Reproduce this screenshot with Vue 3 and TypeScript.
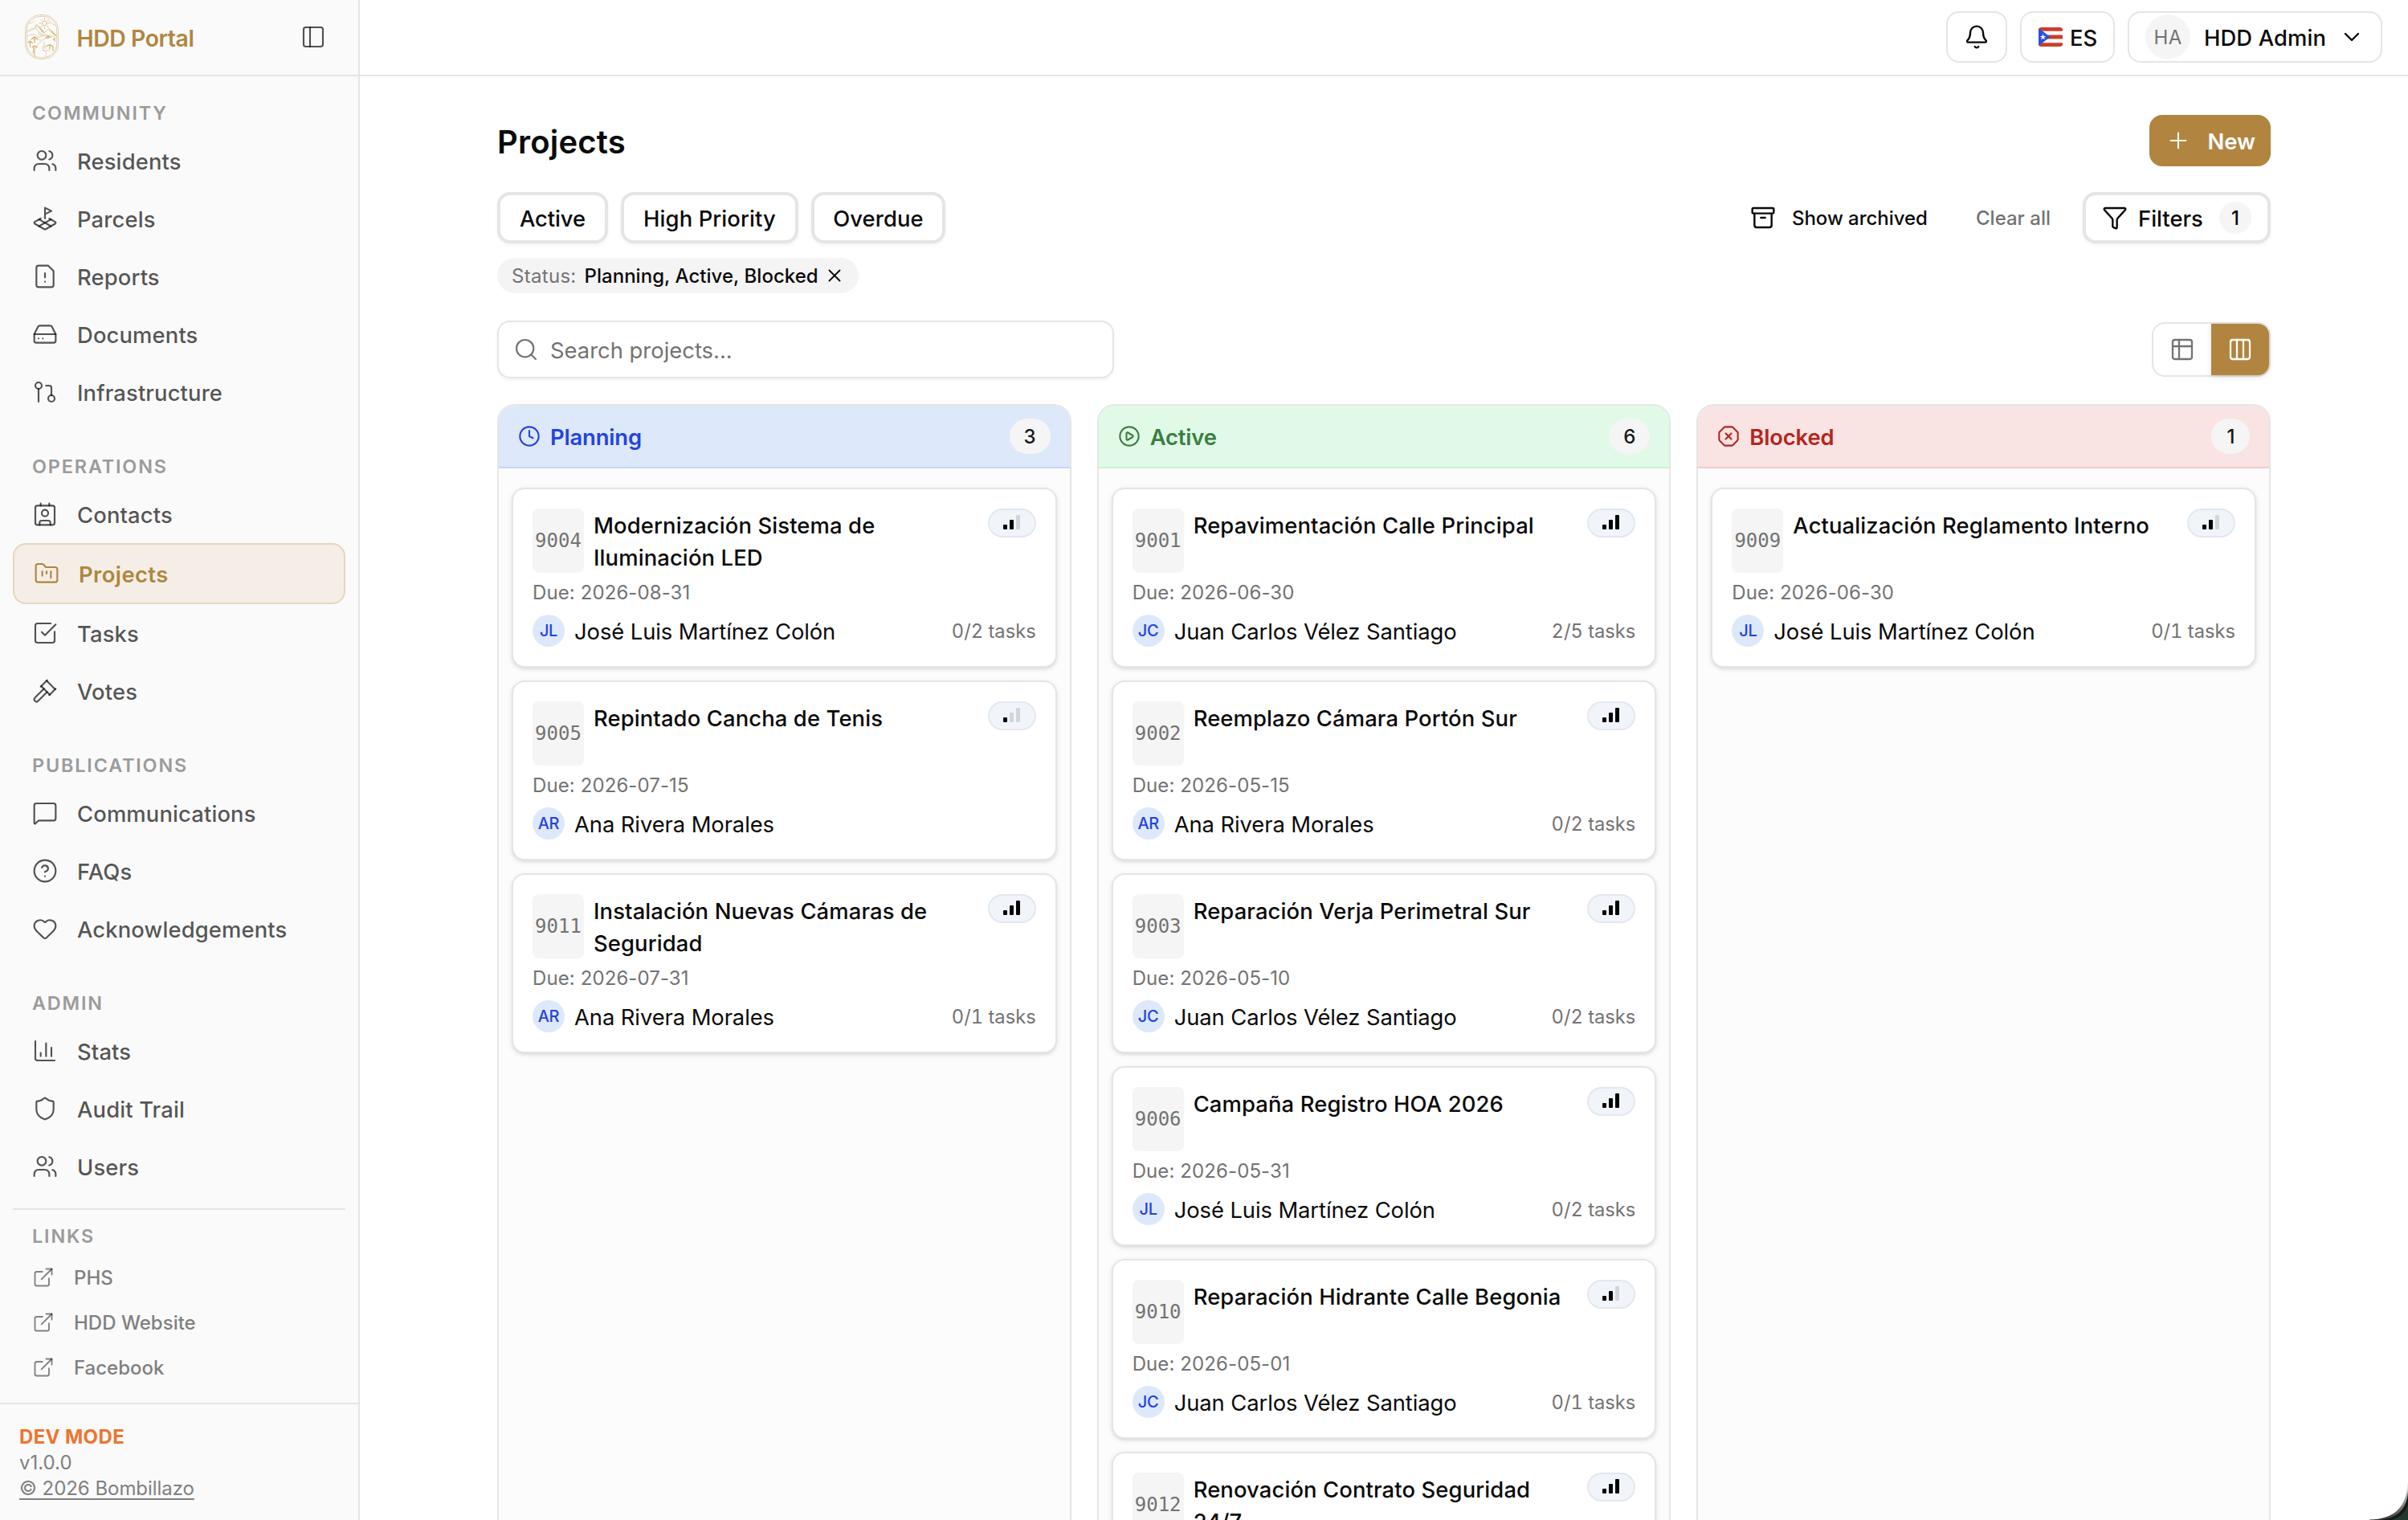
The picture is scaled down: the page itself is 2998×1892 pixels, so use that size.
<script setup lang="ts">
import { h } from 'vue'

const circle = (x: number, y: number, r: number) =>
  `M${x - r} ${y}a${r} ${r} 0 1 0 ${r * 2} 0a${r} ${r} 0 1 0 ${-r * 2} 0`
const frame = 'M5 3h14a2 2 0 0 1 2 2v14a2 2 0 0 1-2 2H5a2 2 0 0 1-2-2V5a2 2 0 0 1 2-2z'

const icons: Record<string, string[]> = {
  panel: [frame, 'M9 3v18'],
  users: ['M16 21v-2a4 4 0 0 0-4-4H6a4 4 0 0 0-4 4v2', circle(9, 7, 4), 'M22 21v-2a4 4 0 0 0-3-3.87', 'M16 3.13a4 4 0 0 1 0 7.75'],
  plot: ['m12 8 6-3-6-3v10', 'm8 11.99-5.5 3.14a1 1 0 0 0 0 1.74l8.5 4.86a2 2 0 0 0 2 0l8.5-4.86a1 1 0 0 0 0-1.74L16 12', 'm6.49 12.85 11.02 6.3', 'M17.51 12.85 6.5 19.15'],
  report: ['M15 2H6a2 2 0 0 0-2 2v16a2 2 0 0 0 2 2h12a2 2 0 0 0 2-2V7Z', 'M12 9v4', 'M12 17h.01'],
  drive: ['M22 12H2', 'M5.45 5.11 2 12v6a2 2 0 0 0 2 2h16a2 2 0 0 0 2-2v-6l-3.45-6.89A2 2 0 0 0 16.76 4H7.24a2 2 0 0 0-1.79 1.11z', 'M6 16h.01', 'M10 16h.01'],
  branch: [circle(18, 18, 3), circle(6, 6, 3), 'M13 6h3a2 2 0 0 1 2 2v7', 'M6 9v12'],
  contact: ['M16 2v2', 'M7 22v-2a2 2 0 0 1 2-2h6a2 2 0 0 1 2 2v2', 'M8 2v2', circle(12, 11, 3), 'M5 4h14a2 2 0 0 1 2 2v14a2 2 0 0 1-2 2H5a2 2 0 0 1-2-2V6a2 2 0 0 1 2-2z'],
  folder: ['M4 20h16a2 2 0 0 0 2-2V8a2 2 0 0 0-2-2h-7.93a2 2 0 0 1-1.66-.9l-.82-1.2A2 2 0 0 0 7.93 3H4a2 2 0 0 0-2 2v13c0 1.1.9 2 2 2Z', 'M8 10v4', 'M12 10v2', 'M16 10v6'],
  task: ['M21 10.656V19a2 2 0 0 1-2 2H5a2 2 0 0 1-2-2V5a2 2 0 0 1 2-2h12.344', 'm9 11 3 3L22 4'],
  gavel: ['m14 13-8.381 8.38a1 1 0 0 1-3.001-3l8.384-8.381', 'm16 16 6-6', 'm21.5 10.5-8-8', 'm8 8 6-6', 'm8.5 7.5 8 8'],
  message: ['M22 17a2 2 0 0 1-2 2H6.828a2 2 0 0 0-1.414.586l-2.202 2.202A.71.71 0 0 1 2 21.286V5a2 2 0 0 1 2-2h16a2 2 0 0 1 2 2z'],
  help: [circle(12, 12, 10), 'M9.09 9a3 3 0 0 1 5.83 1c0 2-3 3-3 3', 'M12 17h.01'],
  heart: ['M2 9.5a5.5 5.5 0 0 1 9.591-3.676.56.56 0 0 0 .818 0A5.49 5.49 0 0 1 22 9.5c0 2.29-1.5 4-3 5.5l-5.492 5.313a2 2 0 0 1-3 .019L5 15c-1.5-1.5-3-3.2-3-5.5'],
  chart: ['M3 3v16a2 2 0 0 0 2 2h16', 'M18 17V9', 'M13 17V5', 'M8 17v-3'],
  shield: ['M20 13c0 5-3.5 7.5-7.66 8.95a1 1 0 0 1-.67-.01C7.5 20.5 4 18 4 13V6a1 1 0 0 1 1-1c2 0 4.5-1.2 6.24-2.72a1.17 1.17 0 0 1 1.52 0C14.51 3.81 17 5 19 5a1 1 0 0 1 1 1z'],
  external: ['M15 3h6v6', 'M10 14 21 3', 'M18 13v6a2 2 0 0 1-2 2H5a2 2 0 0 1-2-2V8a2 2 0 0 1 2-2h6'],
  bell: ['M10.268 21a2 2 0 0 0 3.464 0', 'M3.262 15.326A1 1 0 0 0 4 17h16a1 1 0 0 0 .74-1.673C19.41 13.956 18 12.499 18 8A6 6 0 0 0 6 8c0 4.499-1.411 5.956-2.738 7.326'],
  chevron: ['m6 9 6 6 6-6'],
  plus: ['M5 12h14', 'M12 5v14'],
  archive: ['M3 3h18a1 1 0 0 1 1 1v3a1 1 0 0 1-1 1H3a1 1 0 0 1-1-1V4a1 1 0 0 1 1-1z', 'M4 8v11a2 2 0 0 0 2 2h12a2 2 0 0 0 2-2V8', 'M10 12h4'],
  funnel: ['M10 20a1 1 0 0 0 .553.895l2 1A1 1 0 0 0 14 21v-7a2 2 0 0 1 .517-1.341L21.74 4.67A1 1 0 0 0 21 3H3a1 1 0 0 0-.742 1.67l7.225 7.989A2 2 0 0 1 10 14z'],
  close: ['M18 6 6 18', 'm6 6 12 12'],
  search: [circle(11, 11, 8), 'm21 21-4.3-4.3'],
  table: [frame, 'M9 3v18', 'M3 9h18'],
  columns: [frame, 'M9 3v18', 'M15 3v18'],
  clock: [circle(12, 12, 10), 'M12 6v6l4 2'],
  play: [circle(12, 12, 10), 'M9 9.003a1 1 0 0 1 1.517-.859l4.997 2.997a1 1 0 0 1 0 1.718l-4.997 2.997A1 1 0 0 1 9 14.996z'],
  octagon: ['m15 9-6 6', 'm9 9 6 6', 'M2.586 16.726A2 2 0 0 1 2 15.312V8.688a2 2 0 0 1 .586-1.414l4.688-4.688A2 2 0 0 1 8.688 2h6.624a2 2 0 0 1 1.414.586l4.688 4.688A2 2 0 0 1 22 8.688v6.624a2 2 0 0 1-.586 1.414l-4.688 4.688a2 2 0 0 1-1.414.586H8.688a2 2 0 0 1-1.414-.586z'],
}

const Icon = (props: { name: string; size?: number; stroke?: number }) =>
  h(
    'svg',
    {
      class: 'icon',
      width: props.size ?? 32,
      height: props.size ?? 32,
      viewBox: '0 0 24 24',
      fill: 'none',
      stroke: 'currentColor',
      'stroke-width': props.stroke ?? 1.6,
      'stroke-linecap': 'round',
      'stroke-linejoin': 'round',
    },
    icons[props.name].map((d) => h('path', { d })),
  )
Icon.props = ['name', 'size', 'stroke']

interface NavItem { label: string; icon: string; active?: boolean }
const nav: { title: string; items: NavItem[] }[] = [
  {
    title: 'COMMUNITY',
    items: [
      { label: 'Residents', icon: 'users' },
      { label: 'Parcels', icon: 'plot' },
      { label: 'Reports', icon: 'report' },
      { label: 'Documents', icon: 'drive' },
      { label: 'Infrastructure', icon: 'branch' },
    ],
  },
  {
    title: 'OPERATIONS',
    items: [
      { label: 'Contacts', icon: 'contact' },
      { label: 'Projects', icon: 'folder', active: true },
      { label: 'Tasks', icon: 'task' },
      { label: 'Votes', icon: 'gavel' },
    ],
  },
  {
    title: 'PUBLICATIONS',
    items: [
      { label: 'Communications', icon: 'message' },
      { label: 'FAQs', icon: 'help' },
      { label: 'Acknowledgements', icon: 'heart' },
    ],
  },
  {
    title: 'ADMIN',
    items: [
      { label: 'Stats', icon: 'chart' },
      { label: 'Audit Trail', icon: 'shield' },
      { label: 'Users', icon: 'users' },
    ],
  },
]
const links = ['PHS', 'HDD Website', 'Facebook']

interface Card { id: string; title: string; due: string; initials: string; owner: string; tasks?: string; level: number }
const jose = { initials: 'JL', owner: 'José Luis Martínez Colón' }
const ana = { initials: 'AR', owner: 'Ana Rivera Morales' }
const juan = { initials: 'JC', owner: 'Juan Carlos Vélez Santiago' }

const board: { name: string; tone: string; icon: string; count: number; cards: Card[] }[] = [
  {
    name: 'Planning', tone: 'blue', icon: 'clock', count: 3,
    cards: [
      { id: '9004', title: 'Modernización Sistema de Iluminación LED', due: '2026-08-31', ...jose, tasks: '0/2', level: 2 },
      { id: '9005', title: 'Repintado Cancha de Tenis', due: '2026-07-15', ...ana, level: 1 },
      { id: '9011', title: 'Instalación Nuevas Cámaras de Seguridad', due: '2026-07-31', ...ana, tasks: '0/1', level: 3 },
    ],
  },
  {
    name: 'Active', tone: 'green', icon: 'play', count: 6,
    cards: [
      { id: '9001', title: 'Repavimentación Calle Principal', due: '2026-06-30', ...juan, tasks: '2/5', level: 3 },
      { id: '9002', title: 'Reemplazo Cámara Portón Sur', due: '2026-05-15', ...ana, tasks: '0/2', level: 3 },
      { id: '9003', title: 'Reparación Verja Perimetral Sur', due: '2026-05-10', ...juan, tasks: '0/2', level: 3 },
      { id: '9006', title: 'Campaña Registro HOA 2026', due: '2026-05-31', ...jose, tasks: '0/2', level: 3 },
      { id: '9010', title: 'Reparación Hidrante Calle Begonia', due: '2026-05-01', ...juan, tasks: '0/1', level: 2 },
      { id: '9012', title: 'Renovación Contrato Seguridad 24/7', due: '2026-06-15', ...jose, tasks: '0/1', level: 3 },
    ],
  },
  {
    name: 'Blocked', tone: 'red', icon: 'octagon', count: 1,
    cards: [
      { id: '9009', title: 'Actualización Reglamento Interno', due: '2026-06-30', ...jose, tasks: '0/1', level: 2 },
    ],
  },
]
</script>

<template>
  <div class="app">
    <aside class="sidebar">
      <div class="brand">
        <svg class="logo" viewBox="0 0 42 56" fill="none" stroke="#dcc598" stroke-width="0.8" stroke-linecap="round" stroke-linejoin="round">
          <rect x="0.5" y="0.5" width="41" height="55" rx="19" />
          <rect x="2.3" y="2.3" width="37.4" height="51.4" rx="17.3" />
          <circle cx="24.5" cy="11" r="2.9" stroke="#d3b576" />
          <path stroke="#d3b576" d="M24.5 4.5v2M24.5 15.5v2M18 11h2M29 11h2M19.9 6.4l1.4 1.4M29.1 6.4l-1.4 1.4M19.9 15.6l1.4-1.4M29.1 15.6l-1.4-1.4" />
          <path d="M3 22l4.5-4 3 1 4-6.5 6 6 4 5.5M14.5 12.5l-1 5 3 2 1 3 4 1.5M25 22l5-4.5 4 4 5 5M30 17.5l1 4 3 1.5 4 4" />
          <path stroke="#cfae6c" d="M16 14l6 8M17.5 15l6 7.5M19 16.5l5 6M32 19.5l6 6.5M34 21l5 6" />
          <path d="M4 27c4-3 8-3 11 0s7-2 11-1 8 0 12 3M5 33c6-5 10-2 14-1s8-4 12-4M20 34c-5 3-9 8-8 17M23 34c5 4-5 7 1 11s0 5 2 8M31 46c-4-3-6 1-9-2M9 47c3-1 4 3 3 6M4 20c4 2 5-3 8-3M6 11c3 1 3-2 6-3M30 8c3 1 3 4 7 6" />
          <path stroke="#cfae6c" stroke-width="1.2" d="M12 29v6M8.5 30l3.5-2 3.5 2M4 35l3-1.5 2.5 2M6.5 34v6M9 40.500l3-1.500 3 2M11 40v8M29 30v-3l-3 2M29 27l3.500 1.500M37 33v-3l-2 1M31 38v5M27.500 39l3.500-1.500 3.500 2M35 40v5" />
          <path d="M24 40c2-2 4-1 3 1s-4 1-3-1M16 24c3 3 8 1 13 2" />
        </svg>
        <span class="brand-name">HDD Portal</span>
        <Icon name="panel" class="muted" />
      </div>

      <nav class="nav">
        <section v-for="group in nav" :key="group.title" class="group">
          <h2 class="label">{{ group.title }}</h2>
          <a v-for="item in group.items" :key="item.label" class="item" :class="{ active: item.active }">
            <Icon :name="item.icon" /><span>{{ item.label }}</span>
          </a>
        </section>
        <section class="links">
          <h2 class="label">LINKS</h2>
          <a v-for="link in links" :key="link" class="link">
            <Icon name="external" :size="28" /><span>{{ link }}</span>
          </a>
        </section>
      </nav>

      <footer class="foot">
        <b>DEV MODE</b>
        <span>v1.0.0</span>
        <u>© 2026 Bombillazo</u>
      </footer>
    </aside>

    <div class="body">
      <header class="topbar">
        <button class="top-btn bell"><Icon name="bell" :stroke="1.8" /></button>
        <button class="top-btn lang">
          <svg width="30" height="24" viewBox="0 0 30 24">
            <clipPath id="flag"><rect width="30" height="24" rx="3.5" /></clipPath>
            <g clip-path="url(#flag)">
              <rect width="30" height="24" fill="#fff" />
              <path fill="#c9402c" d="M0 0h30v4.800H0zM0 9.600h30v4.800H0zM0 19.200h30V24H0z" />
              <path fill="#2c4fe0" d="M0 1l14.500 11L0 23z" />
              <path fill="#fff" d="M5.500 8.200l.95 2.700h2.850l-2.300 1.700.85 2.750-2.350-1.650-2.350 1.650.85-2.750-2.300-1.700h2.850z" />
            </g>
          </svg>
          <span>ES</span>
        </button>
        <button class="top-btn user">
          <span class="user-avatar">HA</span>
          <span class="user-name">HDD Admin</span>
          <Icon name="chevron" :stroke="1.8" />
        </button>
      </header>

      <main class="main">
        <div class="title-row">
          <h1>Projects</h1>
          <button class="new"><Icon name="plus" /><span>New</span></button>
        </div>

        <div class="filter-row">
          <div class="quick">
            <button class="outline narrow"><span>Active</span></button>
            <button class="outline wide"><span>High Priority</span></button>
            <button class="outline medium"><span>Overdue</span></button>
          </div>
          <div class="tools">
            <span class="archived"><Icon name="archive" :stroke="1.8" />Show archived</span>
            <span class="clear">Clear all</span>
            <button class="outline filters"><Icon name="funnel" :stroke="1.8" /><span>Filters</span><i>1</i></button>
          </div>
        </div>

        <div class="chip">
          <span class="chip-key">Status:</span><span>Planning, Active, Blocked</span><Icon name="close" :size="26" :stroke="1.7" />
        </div>

        <div class="search-row">
          <div class="search"><Icon name="search" /><span>Search projects...</span></div>
          <div class="toggle">
            <span><Icon name="table" :stroke="1.7" /></span>
            <span class="on"><Icon name="columns" :stroke="1.7" /></span>
          </div>
        </div>

        <div class="board">
          <section v-for="col in board" :key="col.name" class="column">
            <header class="col-head" :class="col.tone">
              <Icon :name="col.icon" :size="28" :stroke="1.8" />
              <span class="col-name">{{ col.name }}</span>
              <span class="count">{{ col.count }}</span>
            </header>
            <div class="cards">
              <article v-for="card in col.cards" :key="card.id" class="card">
                <div class="card-top">
                  <span class="code">{{ card.id }}</span>
                  <h3>{{ card.title }}</h3>
                  <span class="priority">
                    <svg width="22" height="20" viewBox="0 0 22 20">
                      <rect v-for="n in 3" :key="n" :x="(n - 1) * 8" :y="20 - n * 6 - 1" width="5" :height="n * 6" rx="1" :fill="n <= card.level ? '#050505' : '#d2d5da'" />
                    </svg>
                  </span>
                </div>
                <p class="due">Due: {{ card.due }}</p>
                <div class="card-foot">
                  <span class="avatar">{{ card.initials }}</span>
                  <span class="owner">{{ card.owner }}</span>
                  <span v-if="card.tasks" class="tasks">{{ card.tasks }} tasks</span>
                </div>
              </article>
            </div>
          </section>
        </div>
      </main>
    </div>

    <svg class="corner" width="48" height="60" viewBox="0 0 48 60">
      <defs>
        <linearGradient id="edge" x1="0" y1="0" x2="0" y2="1">
          <stop offset="0" stop-color="#000" stop-opacity="0" />
          <stop offset="1" stop-color="#000" stop-opacity="0.8" />
        </linearGradient>
      </defs>
      <path d="M48 12V60H0V59.500C30 59 47 45 47.500 12z" fill="url(#edge)" />
      <path d="M48 24V60H12C34 59 47 47 48 24z" fill="#111a16" />
      <path d="M48 40V60H27C38 57 45 50 48 40z" fill="#20392c" />
    </svg>
  </div>
</template>

<style>
html, body { margin: 0; background: #fff; }
</style>

<style scoped>
.app {
  position: relative;
  display: flex;
  width: 2998px;
  height: 1892px;
  overflow: hidden;
  background: #fff;
  color: #0a0a0a;
  font-family: Inter, "Liberation Sans", sans-serif;
  font-size: 27.4px;
}
.app * { box-sizing: border-box; }
h1, h2, h3, p { margin: 0; font-weight: 500; }
button { margin: 0; padding: 0; font: inherit; color: inherit; background: #fff; white-space: nowrap; }
.icon { flex: none; display: block; }

.sidebar {
  flex: none;
  display: flex;
  flex-direction: column;
  width: 448px;
  border-right: 2px solid #e5e5e5;
  background: #fafafa;
}
.brand {
  flex: none;
  display: flex;
  align-items: center;
  height: 95px;
  padding: 0 40px 2px 31px;
  border-bottom: 2px solid #e5e5e5;
}
.logo { width: 42px; height: 56px; flex: none; }
.brand-name { flex: 1; margin: 4px 0 0 22.5px; font-weight: 600; font-size: 28.4px; letter-spacing: -0.45px; color: #b1863f; }
.muted { color: rgba(10, 10, 10, 0.7); }
.nav { flex: 1; padding: 29px 16px 0; }
.group { margin-bottom: 40px; }
.label { height: 32px; margin: 0 0 8px; padding-left: 24px; line-height: 33.5px; font-size: 23.4px; font-weight: 600; letter-spacing: 1.85px; color: #9b9b9b; }
.item { display: flex; align-items: center; gap: 24px; height: 72px; padding: 0 24px; font-weight: 500; letter-spacing: 0.13px; color: rgba(10, 10, 10, 0.7); }
.item span { padding-top: 2px; }
.item.active { height: 76px; border: 2px solid #e6d6be; border-radius: 16px; background: #f4eee6; color: #b1853f; font-weight: 600; letter-spacing: 0.4px; }
.group:nth-of-type(4) { margin-bottom: 16px; }
.links { border-top: 2px solid #e5e5e5; padding-top: 16px; }
.link { display: flex; align-items: center; gap: 24px; height: 56px; padding-left: 24px; font-size: 24px; color: #808080; font-weight: 500; }
.link span { padding-top: 1px; }
.link .icon { color: rgba(10, 10, 10, 0.5); }
.foot { flex: none; display: flex; flex-direction: column; align-items: flex-start; height: 146px; padding: 25px 24px 0; border-top: 2px solid #e5e5e5; font-size: 24px; line-height: 32px; color: #808080; }
.foot b { font-weight: 700; color: #ee7430; font-size: 24px; letter-spacing: 0.35px; }
.foot u { letter-spacing: -0.05px; text-decoration-thickness: 1.5px; text-underline-offset: 4px; }

.body { flex: 1; display: flex; flex-direction: column; min-width: 0; }
.topbar { flex: none; display: flex; justify-content: flex-end; gap: 16px; height: 95px; padding: 14px 32px 0 0; border-bottom: 2px solid #e5e5e5; font-weight: 500; }
.top-btn { display: flex; align-items: center; height: 64px; border: 2px solid #e5e5e5; border-radius: 16px; }
.top-btn > span:last-of-type { padding-top: 2px; }
.bell { width: 76px; justify-content: center; }
.lang { width: 118px; padding-left: 21px; gap: 9px; }
.user { width: 317px; padding-left: 20px; }
.user-avatar { width: 56px; height: 56px; border-radius: 50%; background: #f5f5f5; color: #737373; font-size: 24px; line-height: 57px; text-align: center; font-weight: 400; letter-spacing: 0.4px; }
.user-name { width: 168px; margin-left: 17px; text-align: left; letter-spacing: 0.1px; }

.main { width: 2208px; margin: 0 auto; padding-top: 48px; }
.title-row { display: flex; align-items: center; justify-content: space-between; height: 64px; }
h1 { font-size: 40px; font-weight: 600; letter-spacing: 0.2px; padding-top: 3px; }
.new { display: flex; align-items: center; width: 151px; height: 64px; padding-left: 20px; gap: 20.5px; border: 0; border-radius: 16px; background: #b1853f; color: #fff; font-weight: 600; }
.new span { padding-top: 2px; }
.filter-row { display: flex; justify-content: space-between; height: 64px; margin-top: 32px; }
.quick { display: flex; gap: 16px; }
.outline { height: 64px; padding: 2px 0 0; border: 4px solid #e5e5e5; border-radius: 16px; font-weight: 500; letter-spacing: 0.1px; box-shadow: 0 2px 4px rgba(0, 0, 0, 0.05); }
.narrow { width: 138px; letter-spacing: -0.1px; }
.wide { width: 221px; }
.medium { width: 167px; }
.tools { display: flex; align-items: center; font-size: 24px; font-weight: 500; }
.archived { display: flex; align-items: center; gap: 20px; width: 281px; letter-spacing: -0.05px; }
.clear { width: 133px; color: #737373; }
.filters { display: flex; align-items: center; width: 234px; padding: 0 0 0 20px; font-size: 27.4px; letter-spacing: 0; }
.filters span { width: 86px; margin-left: 13px; padding-top: 2px; text-align: left; }
.filters i { width: 40px; height: 40px; margin-left: 15px; border-radius: 50%; background: #f5f5f5; font-style: normal; font-size: 24px; line-height: 41px; text-align: center; }

.chip { display: flex; align-items: center; width: 450px; height: 44px; margin-top: 18px; padding-left: 18px; border-radius: 22px; background: #f4f4f4; font-size: 24px; font-weight: 500; letter-spacing: 0.03px; white-space: nowrap; }
.chip-key { width: 90.5px; color: #737373; font-weight: 400; letter-spacing: 0.3px; }
.chip .icon { margin-left: 7.5px; }

.search-row { display: flex; align-items: center; justify-content: space-between; height: 72px; margin-top: 34px; }
.search { display: flex; align-items: center; gap: 14px; width: 768px; height: 72px; padding-left: 18px; border: 2px solid #e5e5e5; border-radius: 16px; color: #737373; box-shadow: 0 2px 4px rgba(0, 0, 0, 0.05); }
.search span { padding-top: 2px; }
.toggle { display: flex; width: 148px; height: 68px; border: 2px solid #e5e5e5; border-radius: 16px; color: #737373; }
.toggle span { flex: 1; display: flex; align-items: center; justify-content: center; }
.toggle .on { background: #b1853f; color: #fff; border-radius: 0 14px 14px 0; box-shadow: 0 2px 6px rgba(0, 0, 0, 0.15); }

.board { display: grid; grid-template-columns: repeat(3, 1fr); gap: 32px; margin-top: 32px; height: 1500px; }
.column { border: 2px solid #e5e5e5; border-radius: 22px; background: #fcfcfc; overflow: hidden; }
.col-head { display: flex; align-items: center; gap: 12px; height: 78px; padding: 0 24px; border-bottom: 2px solid; }
.col-name { flex: 1; padding-top: 2px; font-weight: 600; letter-spacing: -0.15px; }
.blue { background: #dee8fb; border-color: #c2d8fb; color: #2343e0; }
.green { background: #e1fae8; border-color: #c3f4d0; color: #38803f; }
.red { background: #fae3e3; border-color: #f5caca; color: #b3261e; }
.count { height: 44px; padding: 0 18px; border-radius: 22px; background: #f5f5f5; color: #171717; font-size: 24px; line-height: 45px; font-weight: 500; }
.red .count { padding: 0 18.500px 0 19.500px; }
.cards { display: flex; flex-direction: column; gap: 16px; padding: 24px 16px; }
.card { flex: none; height: 224px; padding: 24px; border: 2px solid #e5e5e5; border-radius: 16px; background: #fff; box-shadow: 0 2px 6px rgba(0, 0, 0, 0.1), 0 2px 4px -2px rgba(0, 0, 0, 0.1); }
.card-top { display: flex; align-items: flex-start; height: 80px; }
.code { flex: none; width: 64px; height: 80px; border-radius: 8px; background: #f5f5f5; color: #737373; font-family: "DejaVu Sans Mono", monospace; font-size: 24px; line-height: 81px; text-align: center; }
h3 { flex: 1; margin: 1px 24px 0 12px; font-size: 27.4px; line-height: 40px; font-weight: 500; letter-spacing: 0.12px; }
.priority { flex: none; display: flex; align-items: center; justify-content: center; width: 60px; height: 36px; border: 2px solid #e2e8f0; border-radius: 18px; background: #f1f5f9; }
.priority svg { margin-bottom: 2px; }
.due { margin-top: 9px; font-size: 24px; line-height: 32px; font-weight: 400; letter-spacing: 0.1px; color: #737373; }
.card-foot { display: flex; align-items: center; height: 40px; margin-top: 11px; }
.avatar { width: 40px; height: 40px; border-radius: 50%; background: #dee8fb; color: #2343e0; font-size: 20px; font-weight: 500; line-height: 40px; text-align: center; letter-spacing: -0.3px; }
.owner { flex: 1; margin-left: 12px; padding-top: 1.500px; letter-spacing: -0.09px; white-space: nowrap; }
.tasks { padding-top: 1px; font-size: 23.700px; font-variant-numeric: tabular-nums; color: #737373; }

.corner { position: absolute; right: 0; bottom: 0; }
</style>
